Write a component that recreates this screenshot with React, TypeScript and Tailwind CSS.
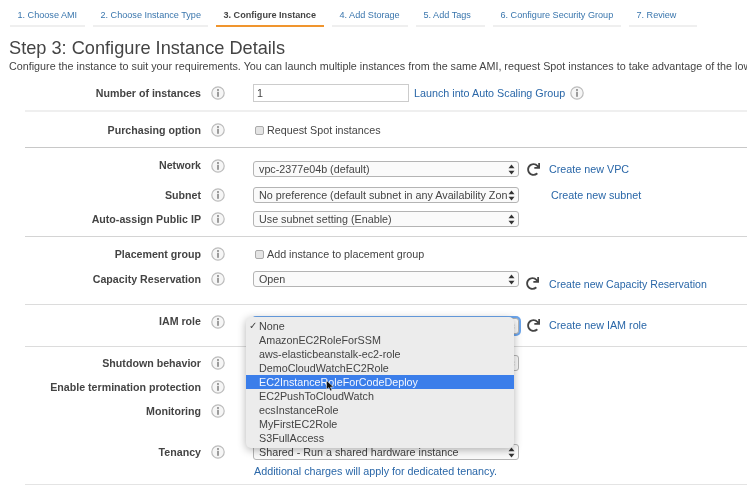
import { FaRedo } from "react-icons/fa";
import type { ReactNode } from "react";

const tabs = [
  { t: "1. Choose AMI", w: "w-[75px]" },
  { t: "2. Choose Instance Type", w: "w-[115px]" },
  { t: "3. Configure Instance", w: "w-[108px]", active: true },
  { t: "4. Add Storage", w: "w-[76px]" },
  { t: "5. Add Tags", w: "w-[69px]" },
  { t: "6. Configure Security Group", w: "w-[128px]" },
  { t: "7. Review", w: "w-[68px]" },
];

const roles = [
  "None",
  "AmazonEC2RoleForSSM",
  "aws-elasticbeanstalk-ec2-role",
  "DemoCloudWatchEC2Role",
  "EC2InstanceRoleForCodeDeploy",
  "EC2PushToCloudWatch",
  "ecsInstanceRole",
  "MyFirstEC2Role",
  "S3FullAccess",
];

function Info() {
  return (
    <svg width="14" height="14" viewBox="0 0 14 14" className="shrink-0">
      <circle cx="7" cy="7" r="6.2" fill="#f6f6f6" stroke="#bcbcbc" strokeWidth="1.2" />
      <circle cx="7" cy="4" r="0.9" fill="#777" />
      <rect x="6.3" y="5.8" width="1.4" height="5" fill="#777" />
    </svg>
  );
}

function Arrows() {
  return (
    <svg width="7" height="11" viewBox="0 0 7 11" className="shrink-0">
      <path d="M3.5 0.5 L6.5 4.3 H0.5 Z" fill="#333" />
      <path d="M3.5 10.5 L6.5 6.7 H0.5 Z" fill="#333" />
    </svg>
  );
}

function Select({ children, focus }: { children?: ReactNode; focus?: boolean }) {
  return (
    <div
      className={
        "flex h-[16px] w-[266px] items-center justify-between rounded-[3px] border border-[#b4b4b4] bg-[#fafafa] pl-[5px] pr-[3px] text-[#444] " +
        (focus ? "shadow-[0_0_0_2px_#6ba5ec]" : "")
      }
    >
      <span className="whitespace-nowrap">{children}</span>
      <Arrows />
    </div>
  );
}

function Link({ children, className = "" }: { children: ReactNode; className?: string }) {
  return <span className={"whitespace-nowrap text-[#2a67a8] " + className}>{children}</span>;
}

function Refresh() {
  return <FaRedo className="shrink-0 text-[13px] text-[#444]" />;
}

function Row({
  label,
  children,
  up,
  className = "",
}: {
  label: string;
  children?: ReactNode;
  up?: boolean;
  className?: string;
}) {
  return (
    <div className={"flex h-[24px] items-center " + className}>
      <div className={"w-[176px] text-right text-[10.65px] font-bold text-[#444] " + (up ? "mb-[8px]" : "")}>
        {label}
      </div>
      <div className={"ml-[10px] " + (up ? "mb-[6px]" : "")}>
        <Info />
      </div>
      <div className="ml-[28px] flex items-center">{children}</div>
    </div>
  );
}

function Check({ children }: { children: ReactNode }) {
  return (
    <label className="flex items-center pl-[2px] text-[#444]">
      <span className="h-[9px] w-[9px] rounded-[2px] border border-[#aaa] bg-[#e4e4e4]" />
      <span className="ml-[3px]">{children}</span>
    </label>
  );
}

export default function App() {
  return (
    <div
      className="h-[485px] w-[747px] overflow-hidden bg-white text-[10.75px] leading-[14px] blur-[0.4px]"
      style={{ fontFamily: '"Liberation Sans", Arial, sans-serif' }}
    >
      <div className="flex gap-[8px] pl-[10px] pt-[8px]">
        {tabs.map((tab) => (
          <div
            key={tab.t}
            className={
              tab.w +
              " h-[19px] whitespace-nowrap border-b-2 pl-[7.5px] text-[9.1px] leading-[15px] " +
              (tab.active ? "border-[#f0952e] font-bold text-[#444]" : "border-[#efefef] text-[#3a76ad]")
            }
          >
            {tab.t}
          </div>
        ))}
      </div>

      <h1 className="ml-[9px] mt-[10px] text-[18.2px] font-normal leading-[22px] text-[#444]">
        Step 3: Configure Instance Details
      </h1>
      <p className="ml-[9px] whitespace-nowrap text-[10.76px] leading-[14px] text-[#444]">
        Configure the instance to suit your requirements. You can launch multiple instances from the same AMI, request
        Spot instances to take advantage of the low
      </p>

      <div className="ml-[25px] mt-[3px]">
        <section className="h-[36px] border-b-2 border-[#efefef] pt-[5px]">
          <Row label="Number of instances">
            <div className="flex h-[18px] w-[156px] items-center border border-[#ccc] pl-[3px] text-[#444]">1</div>
            <Link className="ml-[5px]">Launch into Auto Scaling Group</Link>
            <span className="ml-[5px]">
              <Info />
            </span>
          </Row>
        </section>

        <section className="h-[36px] border-b border-[#c8c8c8] pt-[6px]">
          <Row label="Purchasing option">
            <Check>Request Spot instances</Check>
          </Row>
        </section>

        <section className="h-[89px] border-b border-[#d4d4d4] pt-[9px]">
          <Row label="Network" up>
            <Select>vpc-2377e04b (default)</Select>
            <span className="ml-[8px]">
              <Refresh />
            </span>
            <Link className="ml-[9px]">Create new VPC</Link>
          </Row>
          <Row label="Subnet" className="mt-[2px]">
            <Select>No preference (default subnet in any Availability Zon</Select>
            <Link className="ml-[32px]">Create new subnet</Link>
          </Row>
          <Row label="Auto-assign Public IP">
            <Select>Use subnet setting (Enable)</Select>
          </Row>
        </section>

        <section className="h-[68px] border-b border-[#dcdcdc] pt-[5px]">
          <Row label="Placement group">
            <Check>Add instance to placement group</Check>
          </Row>
          <Row label="Capacity Reservation" className="mt-[1px]">
            <Select>Open</Select>
            <span className="ml-[7px] mt-[9px]">
              <Refresh />
            </span>
            <Link className="ml-[10px] mt-[9px] text-[10.6px]">Create new Capacity Reservation</Link>
          </Row>
        </section>

        <section className="h-[42px] border-b border-[#dcdcdc] pt-[8px]">
          <Row label="IAM role" up>
            <div className="relative mb-[-2px]">
              <Select focus />
              <div className="absolute left-[-7px] top-[-1px] z-10 h-[131px] w-[268px] rounded-[5px] bg-[#ececec] py-[2px] text-[#444] shadow-[0_2px_8px_rgba(0,0,0,0.3)]">
                {roles.map((r, i) => (
                  <div
                    key={r}
                    className={
                      "relative h-[14px] whitespace-nowrap pl-[13px] leading-[14px] " +
                      (i === 4 ? "bg-[#3b7eea] text-[#f2f6ff]" : "")
                    }
                  >
                    {i === 0 && <span className="absolute left-[3px] text-[10px]">✓</span>}
                    {r}
                  </div>
                ))}
                <svg width="8" height="12" viewBox="0 0 8 12" className="absolute left-[80px] top-[63px]">
                  <path d="M0.5 0.5 V9.5 L2.8 7.6 L4.4 11 L6 10.2 L4.5 7 H7.5 Z" fill="#111" stroke="#fff" strokeWidth="0.5" />
                </svg>
              </div>
            </div>
            <span className="ml-[8px]">
              <Refresh />
            </span>
            <Link className="ml-[9px]">Create new IAM role</Link>
          </Row>
        </section>

        <section className="h-[138px] border-b border-[#e4e4e4] pt-[4px]">
          <Row label="Shutdown behavior">
            <Select />
          </Row>
          <Row label="Enable termination protection" />
          <Row label="Monitoring" />
          <Row label="Tenancy" className="mt-[17px]">
            <Select>Shared - Run a shared hardware instance</Select>
          </Row>
          <div className="ml-[229px] text-[#2a67a8]">Additional charges will apply for dedicated tenancy.</div>
        </section>
      </div>
    </div>
  );
}
